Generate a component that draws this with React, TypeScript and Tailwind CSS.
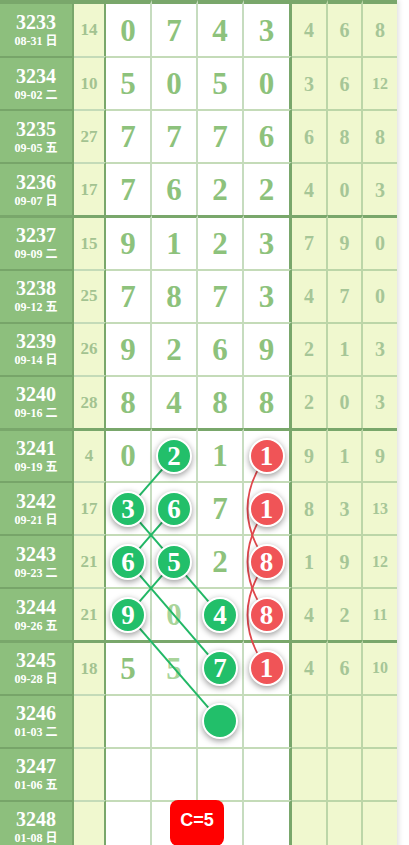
import React from "react";

type Cell =
  | { k: "d"; v: string; f?: boolean }
  | { k: "g"; v: string }
  | { k: "r"; v: string }
  | { k: "e" };

type Row = { id: string; date: string; y: string; d: Cell[]; r: string[] };

const D = (v: string, f?: boolean): Cell => ({ k: "d", v, f });
const G = (v: string): Cell => ({ k: "g", v });
const R = (v: string): Cell => ({ k: "r", v });
const E: Cell = { k: "e" };
const ds = (s: string): Cell[] => s.split("").map((c) => D(c));

const rows: Row[] = [
  { id: "3233", date: "08-31 日", y: "14", d: ds("0743"), r: ["4", "6", "8"] },
  { id: "3234", date: "09-02 二", y: "10", d: ds("5050"), r: ["3", "6", "12"] },
  { id: "3235", date: "09-05 五", y: "27", d: ds("7776"), r: ["6", "8", "8"] },
  { id: "3236", date: "09-07 日", y: "17", d: ds("7622"), r: ["4", "0", "3"] },
  { id: "3237", date: "09-09 二", y: "15", d: ds("9123"), r: ["7", "9", "0"] },
  { id: "3238", date: "09-12 五", y: "25", d: ds("7873"), r: ["4", "7", "0"] },
  { id: "3239", date: "09-14 日", y: "26", d: ds("9269"), r: ["2", "1", "3"] },
  { id: "3240", date: "09-16 二", y: "28", d: ds("8488"), r: ["2", "0", "3"] },
  { id: "3241", date: "09-19 五", y: "4", d: [D("0"), G("2"), D("1"), R("1")], r: ["9", "1", "9"] },
  { id: "3242", date: "09-21 日", y: "17", d: [G("3"), G("6"), D("7"), R("1")], r: ["8", "3", "13"] },
  { id: "3243", date: "09-23 二", y: "21", d: [G("6"), G("5"), D("2"), R("8")], r: ["1", "9", "12"] },
  { id: "3244", date: "09-26 五", y: "21", d: [G("9"), D("0", true), G("4"), R("8")], r: ["4", "2", "11"] },
  { id: "3245", date: "09-28 日", y: "18", d: [D("5"), D("5", true), G("7"), R("1")], r: ["4", "6", "10"] },
  { id: "3246", date: "01-03 二", y: "", d: [E, E, G(""), E], r: ["", "", ""] },
  { id: "3247", date: "01-06 五", y: "", d: [E, E, E, E], r: ["", "", ""] },
  { id: "3248", date: "01-08 日", y: "", d: [E, E, E, E], r: ["", "", ""] },
];

// geometry
const FIRST_H = 56;
const ROW_H = 53.125;
function rowTop(i: number) {
  return i === 0 ? 0 : FIRST_H + (i - 1) * ROW_H;
}
function rowCenter(i: number) {
  if (i === 0) return 4 + 26;
  const b = i % 4 === 0 ? 3 : 2;
  return rowTop(i) + b + (ROW_H - b) / 2;
}
const colX = [128, 174, 220, 266.5];

const serif = { fontFamily: '"Liberation Serif", "Times New Roman", "Noto Sans CJK SC", serif' };

function Ball({ color, v }: { color: "g" | "r"; v: string }) {
  return (
    <div
      className={
        "relative z-20 flex h-[36px] w-[36px] items-center justify-center rounded-full border-2 border-white text-[27px] font-bold leading-none text-white shadow-[0_2px_6px_rgba(0,0,0,0.4)] " +
        (color === "g" ? "bg-[#22bf6a]" : "bg-[#f05457]")
      }
    >
      <span className="mt-[1px]">{v}</span>
    </div>
  );
}

export default function App() {
  const greenSegs: [number, number, number, number][] = [
    [1, 8, 0, 9],
    [0, 9, 1, 10],
    [1, 10, 2, 11],
    [1, 9, 0, 10],
    [0, 10, 2, 12],
    [1, 10, 0, 11],
    [0, 11, 2, 13],
  ];
  const redX = colX[3];
  const redPairs: [number, number][] = [
    [8, 10],
    [9, 11],
    [10, 12],
  ];

  return (
    <div className="min-h-screen w-[409px] overflow-hidden bg-white" style={serif}>
      <div className="relative w-[397px] shadow-[2px_0_5px_rgba(0,0,0,0.12)]">
        {rows.map((row, i) => {
          const first = i === 0;
          const group = i % 4 === 0;
          const h = first ? "h-[56px]" : "h-[53.125px]";
          const bt = first ? "border-t-4" : group ? "border-t-[3px]" : "border-t-2";
          const lblTop = group ? "border-t-[#79a76b]" : "border-t-[#77a569]";
          const oTop = group ? "border-t-[#79a76b]" : "border-t-[#c4dbb8]";
          return (
            <div key={row.id} className={"flex " + h}>
              <div
                className={
                  "flex w-[74px] flex-col items-center justify-center border-r-2 border-r-[#79a76b] bg-[#8dbf7d] font-bold text-white " +
                  bt +
                  " " +
                  lblTop
                }
              >
                <div className="text-[20px] leading-[20px]">{row.id}</div>
                <div className="mt-[3px] text-[12px] leading-[13px]">{row.date}</div>
              </div>
              <div
                className={
                  "flex w-[32px] items-center justify-center border-r-2 border-r-[#79a76b] bg-[#f0f8cf] text-[17px] font-bold text-[#a3c391] " +
                  bt +
                  " " +
                  oTop
                }
              >
                {row.y}
              </div>
              {row.d.map((c, j) => (
                <div
                  key={j}
                  className={
                    "flex items-center justify-center bg-white text-[31px] font-bold leading-none " +
                    (c.k === "d" && c.f ? "text-[#a9d49a] " : "text-[#8dc27c] ") +
                    (j === 3
                      ? "w-[48px] border-r-[3px] border-r-[#79a76b] "
                      : "w-[46px] border-r-2 border-r-[#c6dcbf] ") +
                    bt +
                    " " +
                    oTop
                  }
                >
                  {c.k === "d" && <span>{c.v}</span>}
                  {c.k === "g" && <Ball color="g" v={c.v} />}
                  {c.k === "r" && <Ball color="r" v={c.v} />}
                </div>
              ))}
              {row.r.map((v, j) => (
                <div
                  key={j}
                  className={
                    "flex items-center justify-center bg-[#f0f8cf] font-bold leading-none text-[#a6c697] " +
                    (v.length > 1 ? "text-[16px] " : "text-[20px] ") +
                    (j === 0
                      ? "w-[36px] border-r-2 border-r-[#bcd6a8] "
                      : j === 1
                      ? "w-[35px] border-r-2 border-r-[#bcd6a8] "
                      : "w-[34px] ") +
                    bt +
                    " " +
                    (group ? "border-t-[#79a76b]" : "border-t-[#bcd6a8]")
                  }
                >
                  {v}
                </div>
              ))}
            </div>
          );
        })}

        <svg
          className="pointer-events-none absolute left-0 top-0 z-10"
          width={397}
          height={860}
        >
          {greenSegs.map(([c1, r1, c2, r2], k) => (
            <line
              key={k}
              x1={colX[c1]}
              y1={rowCenter(r1)}
              x2={colX[c2]}
              y2={rowCenter(r2)}
              stroke="#22b866"
              strokeWidth={2}
            />
          ))}
          {redPairs.map(([a, b], k) => {
            const y1 = rowCenter(a);
            const y2 = rowCenter(b);
            return (
              <path
                key={k}
                d={`M ${redX} ${y1} Q ${redX - 38} ${(y1 + y2) / 2} ${redX} ${y2}`}
                fill="none"
                stroke="#e0474c"
                strokeWidth={1.8}
              />
            );
          })}
        </svg>

        <div
          className="absolute left-[170px] top-[800px] z-20 flex h-[46px] w-[54px] items-start justify-center rounded-[8px] bg-[#ff0000] pt-[11px] text-[18px] font-bold leading-none text-white"
          style={{ fontFamily: '"Liberation Sans", Arial, sans-serif' }}
        >
          C=5
        </div>
      </div>
    </div>
  );
}
